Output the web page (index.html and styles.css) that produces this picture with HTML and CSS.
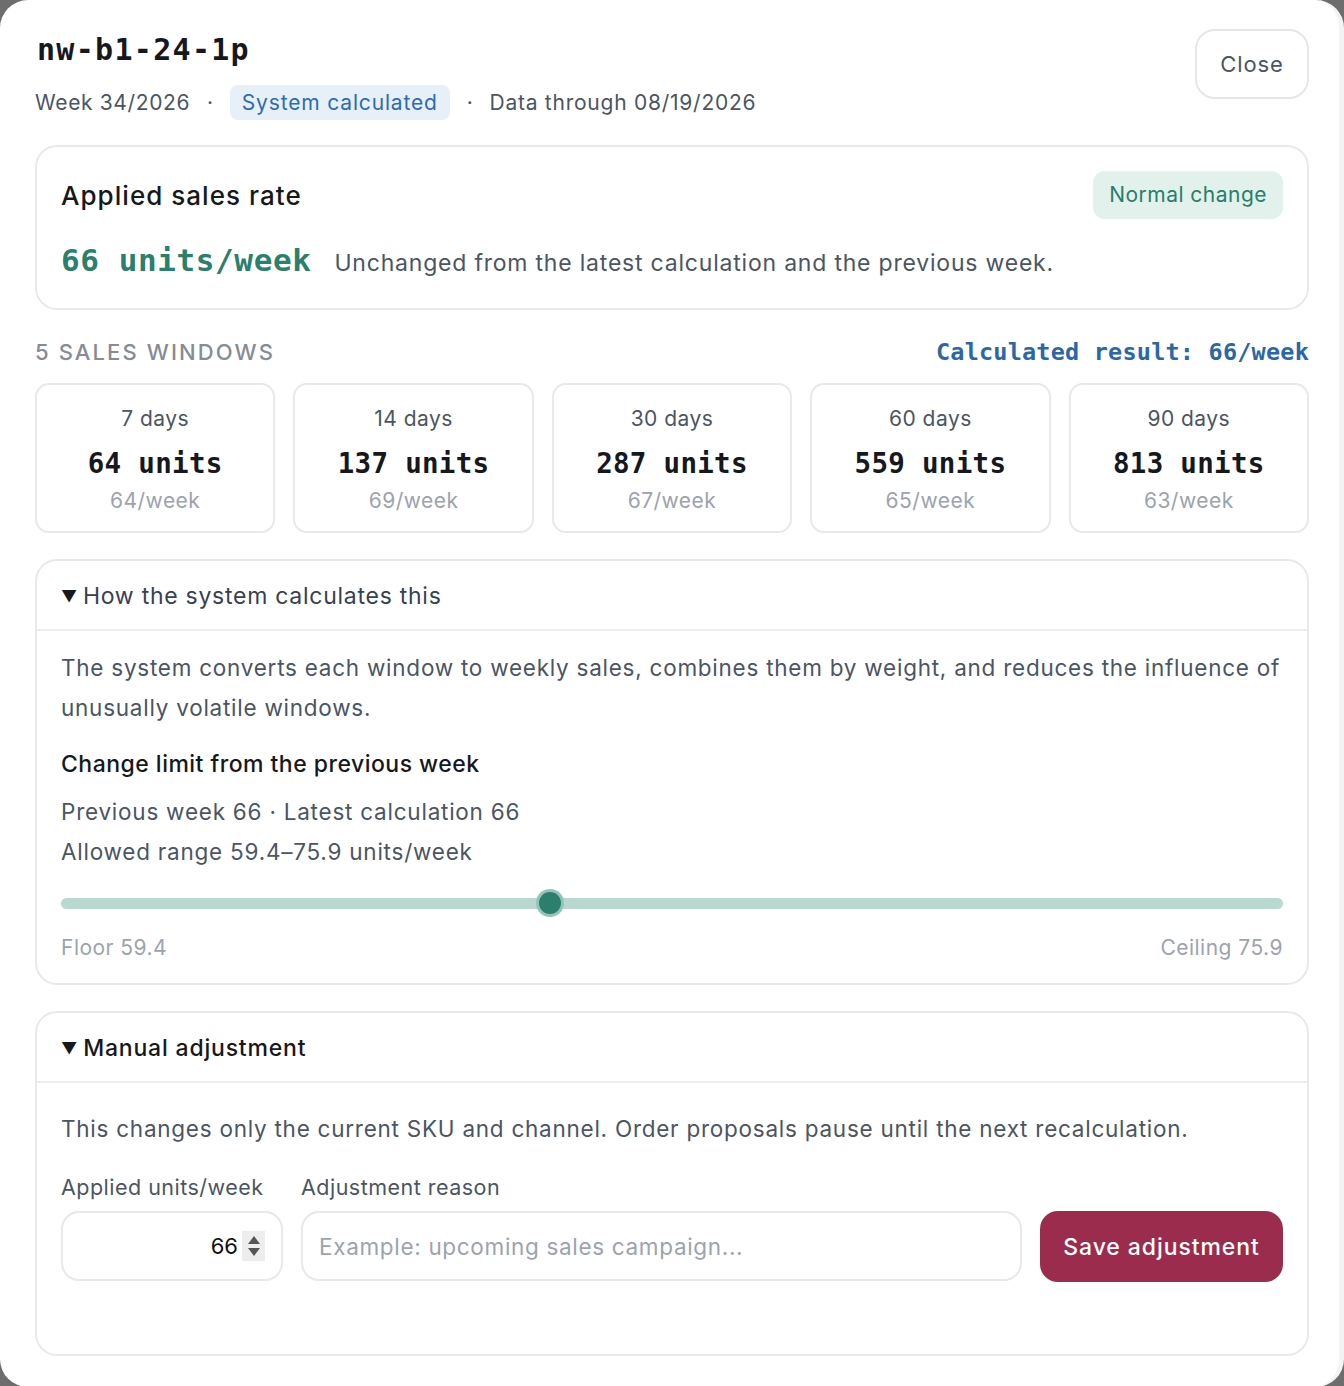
FILE: index.html
```html
<!DOCTYPE html>
<html lang="en">
<head>
<meta charset="utf-8">
<title>nw-b1-24-1p</title>
<link rel="stylesheet" href="styles.css">
</head>
<body>
<div class="dialog">
  <header class="head">
    <div class="head-main">
      <h1 class="sku">nw-b1-24-1p</h1>
      <div class="meta">
        <span>Week 34/2026</span>
        <span class="dot">·</span>
        <span class="badge-blue">System calculated</span>
        <span class="dot">·</span>
        <span class="data-through">Data through 08/19/2026</span>
      </div>
    </div>
    <button class="btn-close" type="button">Close</button>
  </header>

  <section class="card rate">
    <div class="rate-top">
      <h2 class="rate-title">Applied sales rate</h2>
      <span class="badge-green">Normal change</span>
    </div>
    <div class="rate-line">
      <span class="rate-value">66 units/week</span>
      <span class="rate-note">Unchanged from the latest calculation and the previous week.</span>
    </div>
  </section>

  <div class="windows-head">
    <span class="section-label">5 SALES WINDOWS</span>
    <span class="calc-result">Calculated result: 66/week</span>
  </div>

  <div class="windows">
    <div class="win"><div class="win-days">7 days</div><div class="win-units">64 units</div><div class="win-rate">64/week</div></div>
    <div class="win"><div class="win-days">14 days</div><div class="win-units">137 units</div><div class="win-rate">69/week</div></div>
    <div class="win"><div class="win-days">30 days</div><div class="win-units">287 units</div><div class="win-rate">67/week</div></div>
    <div class="win"><div class="win-days">60 days</div><div class="win-units">559 units</div><div class="win-rate">65/week</div></div>
    <div class="win"><div class="win-days">90 days</div><div class="win-units">813 units</div><div class="win-rate">63/week</div></div>
  </div>

  <details class="card panel" open>
    <summary class="panel-sum"><span class="tri">▼</span>How the system calculates this</summary>
    <div class="panel-body calc">
      <p class="para">The system converts each window to weekly sales, combines them by weight, and reduces the influence of unusually volatile windows.</p>
      <h3 class="sub">Change limit from the previous week</h3>
      <p class="line">Previous week 66 · Latest calculation 66</p>
      <p class="line">Allowed range 59.4–75.9 units/week</p>
      <div class="slider">
        <div class="track"><span class="thumb" style="left: 40%"></span></div>
      </div>
      <div class="range-labels">
        <span>Floor 59.4</span>
        <span>Ceiling 75.9</span>
      </div>
    </div>
  </details>

  <details class="card panel" open>
    <summary class="panel-sum strong"><span class="tri">▼</span>Manual adjustment</summary>
    <div class="panel-body manual">
      <p class="para">This changes only the current SKU and channel. Order proposals pause until the next recalculation.</p>
      <div class="form">
        <label class="lbl" for="units">Applied units/week</label>
        <label class="lbl" for="reason">Adjustment reason</label>
        <span></span>
        <div class="num-field">
          <input id="units" class="num-input" type="text" value="66">
          <span class="spin"><span class="spin-up"></span><span class="spin-down"></span></span>
        </div>
        <input id="reason" class="text-input" type="text" placeholder="Example: upcoming sales campaign...">
        <button class="btn-save" type="button">Save adjustment</button>
      </div>
    </div>
  </details>
</div>
</body>
</html>
```

FILE: styles.css
```css
* { box-sizing: border-box; }

html, body {
  margin: 0;
  padding: 0;
}

body {
  background: #6d6d6d;
  font-family: "Inter", "Noto Sans", "Liberation Sans", sans-serif;
  color: #16181d;
  width: 1344px;
  height: 1386px;
  overflow: hidden;
  letter-spacing: 0.03em;
}

.dialog {
  width: 1344px;
  min-height: 1386px;
  background: #ffffff;
  border-radius: 28px;
  border-right: 5px solid #f3f3f6;
  padding: 0 30px 31px 35px;
}

.head {
  display: flex;
  justify-content: space-between;
  align-items: flex-start;
}

.head-main {
  padding-top: 30px;
}

.sku {
  margin: 0 0 0 2px;
  font-family: "DejaVu Sans Mono", "Liberation Mono", monospace;
  font-size: 30px;
  font-weight: 700;
  line-height: 40px;
  color: #16181d;
  letter-spacing: 1.3px;
}

.meta {
  margin-top: 15px;
  display: flex;
  align-items: center;
  font-size: 21px;
  color: #4b5563;
  line-height: 35px;
  letter-spacing: 0.03em;
}

.dot {
  margin: 0 16px 0 17px;
}

.badge-blue {
  background: #e7eff9;
  color: #2d6cb0;
  padding: 0 12px;
  border-radius: 8px;
  line-height: 35px;
  letter-spacing: 0.04em;
}

.data-through {
  letter-spacing: 0.036em;
}

.btn-close {
  margin-top: 29px;
  width: 114px;
  height: 70px;
  border: 2px solid #e6e7eb;
  border-radius: 20px;
  background: #fff;
  font-family: inherit;
  font-size: 22px;
  letter-spacing: 0.04em;
  color: #4b5563;
}

.card {
  border: 2px solid #e8e9ed;
  border-radius: 22px;
  background: #fff;
}

.rate {
  margin-top: 25px;
  padding: 24px 24px 25px 24px;
}

.rate-top {
  display: flex;
  justify-content: space-between;
  align-items: center;
  height: 48px;
}

.rate-title {
  margin: 0;
  font-size: 26px;
  font-weight: 500;
  letter-spacing: 0.04em;
  color: #16181d;
}

.badge-green {
  background: #e2f1eb;
  color: #2a7d6b;
  font-size: 21px;
  line-height: 48px;
  padding: 0 16px;
  border-radius: 12px;
}

.rate-line {
  margin-top: 21px;
  display: flex;
  align-items: baseline;
  line-height: 40px;
}

.rate-value {
  font-family: "DejaVu Sans Mono", "Liberation Mono", monospace;
  font-weight: 700;
  font-size: 31px;
  color: #2a7f6d;
  letter-spacing: 0.6px;
}

.rate-note {
  margin-left: 23px;
  font-size: 23px;
  color: #4b5563;
  letter-spacing: 0.0345em;
}

.windows-head {
  margin-top: 27px;
  display: flex;
  justify-content: space-between;
  align-items: center;
  line-height: 30px;
}

.section-label {
  font-size: 22px;
  font-weight: 500;
  color: #868b96;
  letter-spacing: 2.1px;
}

.calc-result {
  font-family: "DejaVu Sans Mono", "Liberation Mono", monospace;
  font-weight: 700;
  font-size: 23.5px;
  color: #2b66a6;
  letter-spacing: 0.2px;
}

.windows {
  margin-top: 16px;
  display: grid;
  grid-template-columns: repeat(5, 1fr);
  gap: 18px;
}

.win {
  height: 150px;
  border: 2px solid #e8e9ed;
  border-radius: 14px;
  padding-top: 19px;
  text-align: center;
}

.win-days {
  font-size: 21px;
  line-height: 30px;
  color: #4b5563;
}

.win-units {
  margin-top: 9px;
  font-family: "DejaVu Sans Mono", "Liberation Mono", monospace;
  font-weight: 700;
  font-size: 27.5px;
  line-height: 40px;
  color: #16181d;
  letter-spacing: 0.3px;
}

.win-rate {
  margin-top: 3px;
  font-size: 21px;
  line-height: 30px;
  color: #9ca3af;
}

.panel {
  margin-top: 26px;
}

.panel-sum {
  list-style: none;
  display: flex;
  align-items: center;
  height: 70px;
  padding: 2px 24px 0;
  border-bottom: 2px solid #eceef1;
  font-size: 23px;
  color: #374151;
  letter-spacing: 0.032em;
  cursor: pointer;
}

.panel-sum::-webkit-details-marker { display: none; }

.panel-sum.strong {
  color: #16181d;
  font-weight: 500;
  letter-spacing: 0.035em;
}

.tri {
  font-size: 16px;
  margin-right: 5px;
  color: #16181d;
}

.panel-body {
  padding: 0 24px;
}

.calc {
  padding-top: 17px;
  padding-bottom: 20px;
}

.manual {
  padding-top: 26px;
  padding-bottom: 72px;
}

.para {
  margin: 0;
  font-size: 22.5px;
  line-height: 40px;
  color: #4b5563;
  letter-spacing: 0.0333em;
}

.sub {
  margin: 16px 0 0;
  font-size: 23px;
  font-weight: 500;
  line-height: 40px;
  color: #16181d;
}

.line {
  margin: 0;
  font-size: 22.5px;
  line-height: 40px;
  color: #4b5563;
  letter-spacing: 0.034em;
}

.sub + .line {
  margin-top: 8px;
}

.slider {
  margin-top: 16px;
  height: 30px;
  display: flex;
  align-items: center;
}

.track {
  position: relative;
  width: 100%;
  height: 11px;
  border-radius: 6px;
  background: #b9d8d0;
}

.thumb {
  position: absolute;
  top: 50%;
  width: 22px;
  height: 22px;
  margin: -11px 0 0 -11px;
  border-radius: 50%;
  background: #2a7f6d;
  box-shadow: 0 0 0 3px #93c4b8;
}

.range-labels {
  margin-top: 15px;
  display: flex;
  justify-content: space-between;
  font-size: 21px;
  line-height: 30px;
  color: #9ca3af;
}

.form {
  margin-top: 23px;
  display: grid;
  grid-template-columns: 222px 1fr 243px;
  column-gap: 18px;
  row-gap: 9px;
}

.lbl {
  font-size: 21.5px;
  line-height: 30px;
  color: #4b5563;
}

.num-field {
  height: 70px;
  border: 2px solid #e8e9ed;
  border-radius: 18px;
  display: flex;
  align-items: center;
  padding: 0 16px 0 10px;
}

.num-input {
  flex: 1;
  min-width: 0;
  border: none;
  outline: none;
  text-align: right;
  font-family: inherit;
  font-size: 22px;
  color: #111;
  padding: 0 4px 0 0;
  background: transparent;
}

.spin {
  width: 23px;
  height: 30px;
  background: #ededed;
  display: flex;
  flex-direction: column;
  align-items: center;
  justify-content: center;
  gap: 4px;
}

.spin-up {
  width: 0;
  height: 0;
  border-left: 6px solid transparent;
  border-right: 6px solid transparent;
  border-bottom: 8px solid #555;
}

.spin-down {
  width: 0;
  height: 0;
  border-left: 6px solid transparent;
  border-right: 6px solid transparent;
  border-top: 8px solid #555;
}

.text-input {
  height: 70px;
  border: 2px solid #e8e9ed;
  border-radius: 18px;
  padding: 0 16px;
  font-family: inherit;
  font-size: 22.5px;
  letter-spacing: 0.03em;
  color: #111;
  outline: none;
}

.text-input::placeholder {
  color: #9ca3af;
}

.btn-save {
  height: 71px;
  border: none;
  border-radius: 18px;
  background: #9c2c4d;
  color: #fff;
  font-family: inherit;
  font-size: 23px;
  font-weight: 500;
  letter-spacing: 0.04em;
}
```
